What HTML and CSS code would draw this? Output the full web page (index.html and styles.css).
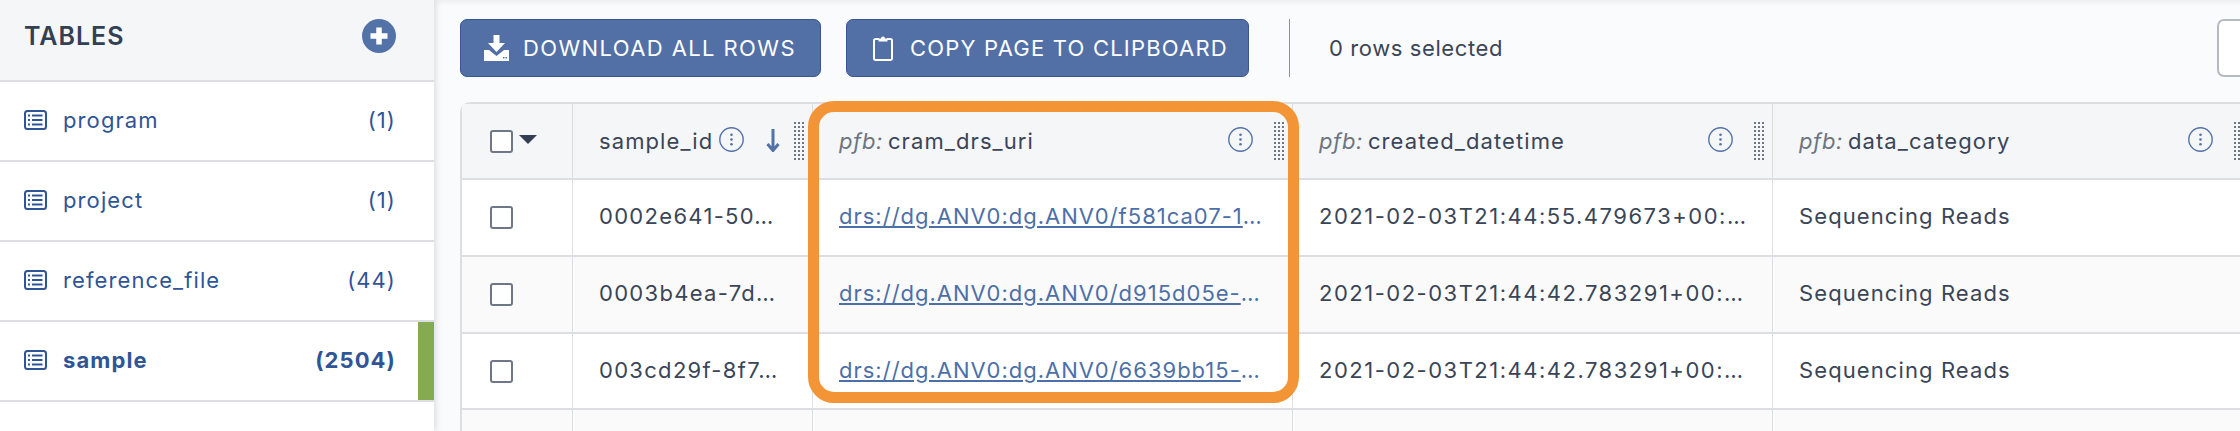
FILE: index.html
```html
<!DOCTYPE html>
<html>
<head>
	<meta charset="UTF-8">
	<title>Tables</title>
	<link rel="stylesheet" href="styles.css">
</head>

<body>
	<svg width="0" height="0" class="defs">
		<symbol id="list" viewBox="0 0 23 20">
			<rect x="1" y="1" width="21" height="18" rx="2.5" fill="none" stroke="currentColor" stroke-width="2"/>
			<path d="M8 5.5h10.500M8 10h10.500M8 14.500h10.500" fill="none" stroke="currentColor" stroke-width="2"/>
			<path d="M4 4.500h2v2h-2zM4 9h2v2h-2zM4 13.500h2v2h-2z" fill="currentColor"/>
		</symbol>
		<symbol id="info" viewBox="0 0 25 25">
			<circle cx="12.500" cy="12.500" r="11.700" fill="none" stroke="#5272a8" stroke-width="1.400"/>
			<circle cx="12.500" cy="7.800" r="1.300" fill="#5272a8"/>
			<circle cx="12.500" cy="12.500" r="1.300" fill="#5272a8"/>
			<circle cx="12.500" cy="17.200" r="1.300" fill="#5272a8"/>
		</symbol>
	</svg>

	<div class="page">
		<div class="sidebar">
			<div class="side-head">
				<span class="side-title">TABLES</span>
				<svg class="plus" viewBox="0 0 34 34">
					<circle cx="17" cy="17" r="17" fill="#5272a8"/>
					<path d="M17 8.500v17M8.500 17h17" stroke="#fff" stroke-width="5.500"/>
				</svg>
			</div>
			<div class="side-row"><svg class="list-icon"><use href="#list"/></svg><span class="side-name">program</span><span class="side-count">(1)</span></div>
			<div class="side-row"><svg class="list-icon"><use href="#list"/></svg><span class="side-name">project</span><span class="side-count">(1)</span></div>
			<div class="side-row"><svg class="list-icon"><use href="#list"/></svg><span class="side-name">reference_file</span><span class="side-count">(44)</span></div>
			<div class="side-row active"><svg class="list-icon"><use href="#list"/></svg><span class="side-name">sample</span><span class="side-count">(2504)</span></div>
		</div>

		<div class="main">
			<div class="toolbar">
				<div class="btn btn-download">
					<svg class="btn-icon" viewBox="0 0 25 26">
						<path d="M9.500 0h6v8h5.500l-8.500 9-8.500-9h5.500z" fill="#fff"/>
						<path d="M0 15h5l7.500 6 7.500-6h5v11h-25z" fill="#fff"/>
						<path d="M19 22h1.500v1.500h-1.500zM21.500 22h1.500v1.500h-1.500z" fill="#5270a6"/>
					</svg>
					<span>DOWNLOAD ALL ROWS</span>
				</div>
				<div class="btn btn-copy">
					<svg class="btn-icon" viewBox="0 0 20 26">
						<path d="M6 4h-3.500a1.500 1.500 0 0 0-1.500 1.500v18a1.500 1.500 0 0 0 1.500 1.500h15a1.500 1.500 0 0 0 1.500-1.500v-18a1.500 1.500 0 0 0-1.500-1.500h-3.500" fill="none" stroke="#fff" stroke-width="2"/>
						<path d="M5.500 6.500v-3h2.500a2 2 0 0 1 4 0h2.500v3z" fill="#fff"/>
					</svg>
					<span>COPY PAGE TO CLIPBOARD</span>
				</div>
				<div class="divider"></div>
				<div class="selected-count">0 rows selected</div>
				<div class="search"></div>
			</div>

			<div class="table-wrap">
				<div class="table">
					<div class="cell head first"><span class="check"></span><span class="caret"></span></div>
					<div class="cell head">
						<span class="col-name">sample_id</span>
						<svg class="info info-near"><use href="#info"/></svg>
						<svg class="sort" viewBox="0 0 14 23"><path d="M7 0v20M1.500 15l5.500 6.500 5.500-6.500" fill="none" stroke="#5272a8" stroke-width="3"/></svg>
						<span class="drag"></span>
					</div>
					<div class="cell head"><em class="ns">pfb:</em><span class="col-name">cram_drs_uri</span><svg class="info"><use href="#info"/></svg><span class="drag"></span></div>
					<div class="cell head"><em class="ns">pfb:</em><span class="col-name">created_datetime</span><svg class="info"><use href="#info"/></svg><span class="drag"></span></div>
					<div class="cell head"><em class="ns">pfb:</em><span class="col-name">data_category</span><svg class="info"><use href="#info"/></svg><span class="drag"></span></div>

					<div class="cell first"><span class="check"></span></div>
					<div class="cell text id">0002e641-50…</div>
					<div class="cell text link-cell"><a class="link">drs://dg.ANV0:dg.ANV0/f581ca07-1</a>…</div>
					<div class="cell text date">2021-02-03T21:44:55.479673+00:…</div>
					<div class="cell text">Sequencing Reads</div>

					<div class="cell first alt"><span class="check"></span></div>
					<div class="cell text id alt">0003b4ea-7d…</div>
					<div class="cell text link-cell alt"><a class="link">drs://dg.ANV0:dg.ANV0/d915d05e-</a>…</div>
					<div class="cell text date alt">2021-02-03T21:44:42.783291+00:…</div>
					<div class="cell text alt">Sequencing Reads</div>

					<div class="cell first"><span class="check"></span></div>
					<div class="cell text id">003cd29f-8f7…</div>
					<div class="cell text link-cell"><a class="link">drs://dg.ANV0:dg.ANV0/6639bb15-</a>…</div>
					<div class="cell text date">2021-02-03T21:44:42.783291+00:…</div>
					<div class="cell text">Sequencing Reads</div>

					<div class="cell alt"></div>
					<div class="cell alt"></div>
					<div class="cell alt"></div>
					<div class="cell alt"></div>
					<div class="cell alt"></div>
				</div>
				<div class="highlight"></div>
			</div>
		</div>
	</div>
</body>
</html>
```

FILE: styles.css
```css
*
{
	margin: 0px;
	padding: 0px;
	box-sizing: border-box;
}
body
{
	width: 2240px;
	height: 431px;
	overflow: hidden;
	font-family: Inter, "Open Sans", sans-serif;
	color: #3a4557;
	background: #fafbfd;
}
.defs
{
	display: block;
	height: 0;
}
.page
{
	display: flex;
	height: 431px;
}

/* left column */
.sidebar
{
	width: 434px;
	flex: none;
	background: #fff;
	box-shadow: 2px 0 6px rgba(0,0,0,0.12);
	position: relative;
	color: #2f5596;
}
.side-head
{
	height: 82px;
	display: flex;
	align-items: center;
	justify-content: space-between;
	padding: 0 38px 8px 24px;
	background: #f5f6f8;
	border-bottom: 2px solid #dcdee1;
}
.side-title
{
	font-size: 25px;
	font-weight: 600;
	color: #333f52;
	letter-spacing: 1px;
}
.plus
{
	width: 34px;
	height: 34px;
}
.side-row
{
	height: 80px;
	display: flex;
	align-items: center;
	padding: 0 38px 2px 24px;
	border-bottom: 2px solid #dcdee1;
	font-size: 22px;
	letter-spacing: 1.1px;
}
.list-icon
{
	width: 23px;
	height: 20px;
	margin-right: 16px;
}
.side-count
{
	margin-left: auto;
}
.active
{
	font-weight: 700;
	box-shadow: inset -16px 0 0 #84ab52;
}

/* right column */
.main
{
	flex: 1;
	min-width: 0;
	padding: 19px 0 0 26px;
	overflow: hidden;
	background: linear-gradient(#eff0f3, #fafbfd 6px);
}
.toolbar
{
	display: flex;
	align-items: center;
	height: 58px;
	font-size: 22px;
}
.btn
{
	height: 58px;
	display: flex;
	align-items: center;
	background: #5270a6;
	border: 1px solid #36578f;
	border-radius: 7px;
	color: #fff;
	white-space: nowrap;
}
.btn-download
{
	width: 361px;
	padding-left: 23px;
	margin-right: 25px;
	letter-spacing: 1.4px;
}
.btn-copy
{
	width: 403px;
	padding-left: 26px;
	letter-spacing: 1.2px;
}
.btn-icon
{
	height: 26px;
	flex: none;
}
.btn-download .btn-icon
{
	width: 25px;
	margin-right: 14px;
}
.btn-copy .btn-icon
{
	width: 20px;
	margin-right: 17px;
}
.divider
{
	width: 1px;
	height: 58px;
	background: #8a919c;
	margin: 0 39px 0 40px;
}
.selected-count
{
	letter-spacing: 0.6px;
}
.search
{
	width: 60px;
	height: 58px;
	margin-left: auto;
	margin-right: -37px;
	background: #fff;
	border: 2px solid #b5b9c0;
	border-radius: 7px;
}

/* table */
.table-wrap
{
	position: relative;
	margin-top: 25px;
	width: 1792px;
}
.table
{
	display: grid;
	grid-template-columns: 111px 240px 480px 480px 480px;
	grid-template-rows: 76px 77px 77px 76px 40px;
	border-top: 2px solid #dcdee1;
	border-left: 2px solid #dcdee1;
	border-top-left-radius: 10px;
	background: #fff;
	font-size: 22px;
	letter-spacing: 1.1px;
	white-space: nowrap;
}
.cell
{
	display: flex;
	align-items: center;
	padding-left: 26px;
	border-right: 1px solid #dcdee1;
	border-bottom: 2px solid #dcdee1;
	overflow: hidden;
}
.text
{
	padding-bottom: 3px;
}
.head
{
	background: #f5f6f8;
	padding-right: 7px;
}
.alt
{
	background: #fafafa;
}
.first
{
	padding-left: 28px;
}
.id
{
	letter-spacing: 1.3px;
}
.date
{
	letter-spacing: 1.5px;
}
.link-cell
{
	letter-spacing: 1px;
	color: #4d6fa8;
}
.check
{
	width: 23px;
	height: 23px;
	background: #fff;
	border: 2px solid #6d7788;
	border-radius: 3px;
	flex: none;
}
.caret
{
	margin-left: 6px;
	margin-top: -4px;
	border-left: 9px solid transparent;
	border-right: 9px solid transparent;
	border-top: 9px solid #333f52;
}
.ns
{
	margin-right: 5px;
	color: #6d7481;
	letter-spacing: 0.6px;
}
.info
{
	width: 25px;
	height: 25px;
	margin-left: auto;
	margin-top: -4px;
	flex: none;
}
.info-near
{
	margin-left: 6px;
}
.sort
{
	width: 14px;
	height: 23px;
	margin-left: auto;
	margin-top: -2px;
	flex: none;
}
.drag
{
	width: 12px;
	height: 40px;
	margin-left: 20px;
	flex: none;
	background-image: radial-gradient(circle, #6f7580 1px, transparent 1.300px);
	background-size: 4px 4px;
}
.sort + .drag
{
	margin-left: 13px;
}
.link
{
	text-decoration: underline;
}
.highlight
{
	position: absolute;
	left: 348px;
	top: -1px;
	width: 491px;
	height: 302px;
	border: 11px solid #f39536;
	border-radius: 26px;
}
```
